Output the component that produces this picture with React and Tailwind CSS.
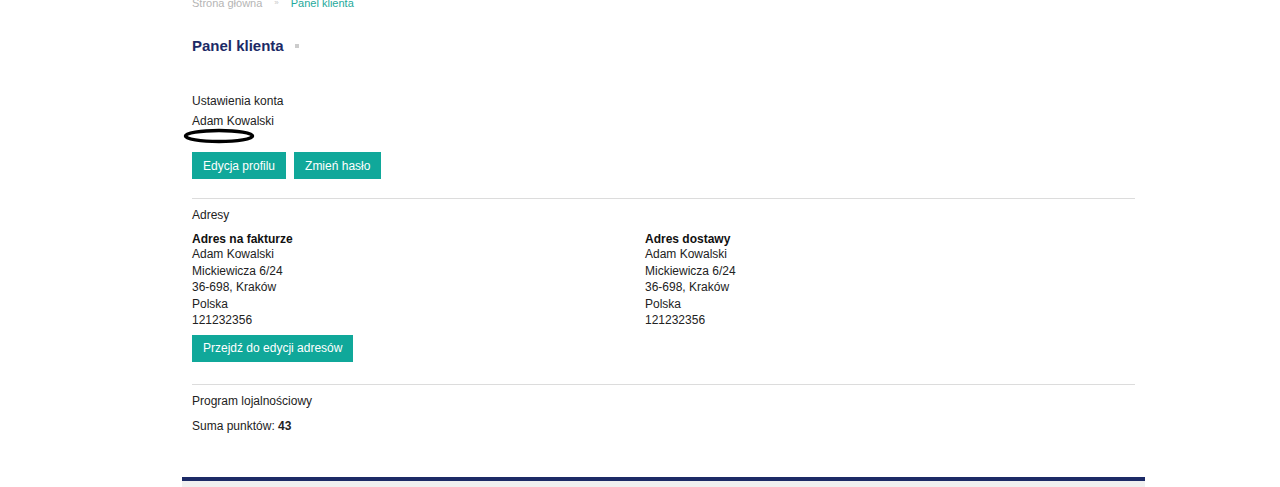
export default function App() {
  const addr = ['Adam Kowalski', 'Mickiewicza 6/24', '36-698, Kraków', 'Polska', '121232356']

  return (
    <div className="min-h-[487px] bg-white text-[12px] text-[#222] font-['Liberation_Sans',Arial,sans-serif]">
      <div className="w-[963px] ml-[182px]">
        <div className="px-[10px]">
          <div className="flex items-center gap-[12px] h-[8px] -mt-[1px] leading-[14px] text-[11px]">
            <span className="text-[#b5b5b5]">Strona główna</span>
            <span className="text-[#c8c8c8] text-[8px]">»</span>
            <span className="text-[#1fa99b]">Panel klienta</span>
          </div>

          <div className="flex items-center mt-[30px] h-[18px]">
            <h1 className="text-[15px] font-bold text-[#1c2a66]">Panel klienta</h1>
            <span className="ml-[11px] w-[4px] h-[4px] bg-[#ccc]"></span>
          </div>

          <div className="mt-[39px]">
            <p className="leading-[14px]">Ustawienia konta</p>
            <p className="leading-[14px] mt-[6px]">Adam Kowalski</p>
            <svg width="74" height="16" viewBox="0 0 74 16" className="-ml-[9px]">
              <ellipse cx="36" cy="8" rx="33.5" ry="5.5" fill="none" stroke="#000" strokeWidth="3.5" />
            </svg>
            <div className="flex gap-[8px] mt-[8px]">
              <button className="h-[27px] px-[11px] bg-[#10a89a] text-white text-[12px]">Edycja profilu</button>
              <button className="h-[27px] px-[11px] bg-[#10a89a] text-white text-[12px]">Zmień hasło</button>
            </div>
          </div>

          <div className="border-t border-[#dcdcdc] mt-[19px] pt-[9px]">
            <p className="leading-[14px]">Adresy</p>
            <div className="grid grid-cols-[453px_1fr] mt-[10px]">
              <div>
                <p className="font-bold leading-[14px] text-[#111]">Adres na fakturze</p>
                {addr.map(l => <p key={l} className="leading-[16.5px]">{l}</p>)}
              </div>
              <div>
                <p className="font-bold leading-[14px] text-[#111]">Adres dostawy</p>
                {addr.map(l => <p key={l} className="leading-[16.5px]">{l}</p>)}
              </div>
            </div>
            <button className="mt-[6px] h-[27px] px-[11px] bg-[#10a89a] text-white text-[12px]">Przejdź do edycji adresów</button>
          </div>

          <div className="border-t border-[#dcdcdc] mt-[22px] pt-[9px]">
            <p className="leading-[14px]">Program lojalnościowy</p>
            <p className="leading-[14px] mt-[11px]">Suma punktów: <b>43</b></p>
          </div>
        </div>

        <div className="mt-[44px] h-[4px] bg-[#1c2a66]"></div>
        <div className="h-[8px] bg-[#f0f0f0]"></div>
      </div>
    </div>
  )
}
